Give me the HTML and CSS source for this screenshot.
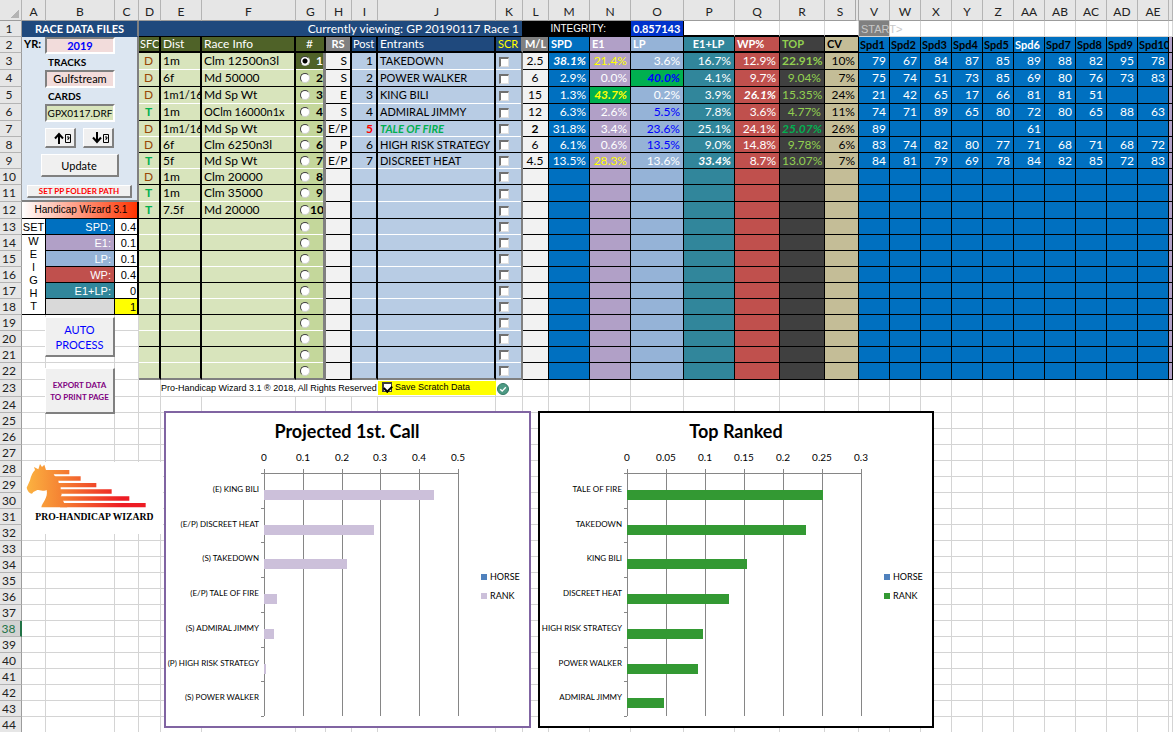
FILE: index.html
```html
<!DOCTYPE html>
<html lang="en">
<head>
<meta charset="utf-8">
<title>Pro-Handicap Wizard 3.1</title>
<link rel="stylesheet" href="styles.css">
</head>
<body>
<main class="sheet">
  <table class="grid">
    <colgroup id="cols"></colgroup>
    <thead><tr id="letters"></tr></thead>
    <tbody id="rows"></tbody>
  </table>

  <button class="float-btn auto" type="button">AUTO<br>PROCESS</button>
  <button class="float-btn export" type="button">EXPORT DATA<br>TO PRINT PAGE</button>

  <svg class="logo" viewBox="0 0 423 216" role="img" aria-label="Pro-Handicap Wizard">
    <defs>
      <linearGradient id="flame" gradientUnits="userSpaceOnUse" x1="20" y1="0" x2="300" y2="0">
        <stop offset="0" stop-color="#fbb040"/><stop offset=".35" stop-color="#f58233"/><stop offset="1" stop-color="#ed1c24"/>
      </linearGradient>
    </defs>
    <g fill="url(#flame)">
      <path d="M39 24 L36 15 L49 22 L54 6 L60 15 L67 8 L72 24 L90 26 L98 42 L108 50 L110 62 L116 72 L116 86 L119 98 L115 106 L121 112 L128 126 L136 136 L58 136 C60 122 79 108 74 84 C66 90 54 82 46 84 L34 90 L30 95 Q18 94 14 77 L24 55 Q28 35 39 24Z"/>
      <path d="M70 24H142V37H70zM89 43H176V56H89zM102 63H223V76H102zM108 82H269V95H108zM114 103H322V116H114zM114 123H371V136H114z"/>
    </g>
    <text x="40" y="174" class="logo-name">PRO-HANDICAP WIZARD</text>
  </svg>

  <label class="save"><input type="checkbox" class="tick" checked>Save Scratch Data</label>
  <svg class="ok" viewBox="0 0 12 12" aria-hidden="true">
    <circle cx="6" cy="6" r="5.5" fill="#4d9a84" stroke="#347a66"/>
    <path d="M3.2 6.2 5.2 8.1 8.8 4.2" fill="none" stroke="#fff" stroke-width="1.4"/>
  </svg>

  <figure class="chart call" id="chart-call"></figure>
  <figure class="chart top" id="chart-top"></figure>
</main>

<template id="files-panel">
  <form class="files">
    <label for="year">YR:</label><input id="year" class="year" value="2019">
    <label for="tracks" class="over">TRACKS</label>
    <input id="tracks" class="track" value="Gulfstream">
    <label for="cards" class="over">CARDS</label>
    <input id="cards" class="card" value="GPX0117.DRF">
    <div class="steps">
      <button type="button" aria-label="Previous card"><svg viewBox="0 0 18 12"><path d="M5 12V3M1 6.500 5 2 9 6.500" fill="none" stroke="#000" stroke-width="2"/><path d="M11.500 2.500h5v8h-5zM13 5h2v1.500h-1v1.500" fill="none" stroke="#000"/></svg></button>
      <button type="button" aria-label="Next card"><svg viewBox="0 0 18 12"><path d="M5 0V9M1 5.500 5 10 9 5.500" fill="none" stroke="#000" stroke-width="2"/><path d="M11.500 2.500h5v8h-5zM13 5h2v1.500h-1v1.500" fill="none" stroke="#000"/></svg></button>
    </div>
    <button type="button" class="update">Update</button>
    <button type="button" class="path">SET PP FOLDER PATH</button>
  </form>
</template>
<script src="script.js"></script>
</body>
</html>
```

FILE: styles.css
```css
* { box-sizing: border-box; }
body {
  margin: 0;
  background: #fff;
  color: #000;
  font: 12px/14px Lato, "Noto Sans", sans-serif;
}
.sheet { position: relative; overflow: hidden; }
.grid {
  width: 100%;
  table-layout: fixed;
  border-collapse: separate;
  border-spacing: 0;
}
.grid td, .grid th {
  padding: 0 3px 0 2px;
  overflow: hidden;
  white-space: nowrap;
  font-weight: normal;
  text-align: left;
  border: 0 solid #d4d4d4;
  border-width: 0 1px 1px 0;
}
.row16 { height: 16px; }
.row17 { height: 17px; }

/* sheet headings */
.letters { height: 21px; }
.grid .letters th {
  padding: 4px 0 0;
  text-align: center;
  color: #222;
  background: #e6e6e6;
  border-color: #b4b4b4;
  border-bottom-color: #9c9c9c;
}
.grid .letters .hidden-after { border-right: 4px double #a8a8a8; }
.grid .letters .corner {
  background: linear-gradient(135deg, transparent 50%, #b4b4b4 50%) 10px 9px / 9px 9px no-repeat #e6e6e6;
}
.grid th.num {
  padding: 0;
  padding-right: 3px;
  text-align: center;
  color: #222;
  background: #e6e6e6;
  border-color: #b4b4b4;
  border-right-color: #9c9c9c;
}
.grid th.active { background: #d2d2d2; color: #217346; border-right: 2px solid #217346; }

/* alignment and emphasis */
.grid .r { text-align: right; }
.grid .c { text-align: center; }
.grid .b { font-weight: bold; }
.grid .hot { font-weight: bold; font-style: italic; }
.grid .yellow { color: #ff0; }
.grid .white { color: #fff; }
.grid .blue { color: #00f; }
.grid .red { color: #f00; }
.grid .green { color: #00b050; }
.grid .brown { color: #974706; }
.grid .on-green { background: #00b050; }
.grid .small { font-size: 11px; }
.grid .flush { padding-left: 1px; padding-right: 0; }

/* title row */
.grid .bar { background: #1f497d; color: #fff; border-color: #000; }
.grid .files-head { padding: 0; text-align: center; font-size: 11px; font-weight: bold; border-right: 2px solid #808080; border-bottom-color: #1f497d; }
.grid .black { background: #000; border-color: #000; color: #fff; }
.sans { font-family: "Liberation Sans", sans-serif; font-size: 11px; }
.grid .integrity { padding-right: 24px; font-size: 10px; }
.grid .score { background: #0033cc; color: #fff; font-size: 11px; font-weight: bold; border-color: #000; }
.grid .start { background: #808080; color: #c8c8c8; overflow: visible; }
.grid .ruled { border-bottom: 2px solid #000; }

/* race list */
.grid .race { background: #d8e4bc; border-color: #000; border-right-width: 2px; }
.grid .race-no { background: #c4d79b; border-color: #000; border-right: 3px solid #808080; }
.grid .race-head { background: #4f6228; color: #fff; border-color: #000; border-width: 0 2px 2px 0; }
.grid .chosen { background: #4f6228; color: #fff; }
.pick { display: flex; align-items: center; justify-content: space-between; padding-left: 3px; height: 14px; }
.dot {
  appearance: none;
  flex: none;
  width: 10px;
  height: 10px;
  margin: 0;
  border: 1px solid #404040;
  border-right-color: #d0d0d0;
  border-bottom-color: #d0d0d0;
  border-radius: 50%;
  background: #fff;
}
.dot:checked { background: radial-gradient(#000 0 2px, #fff 3px); }

/* entrants */
.grid .style { background: #f2f2f2; border-color: #000; border-right-width: 2px; }
.grid .ent { background: #b8cce4; border-color: #000; border-right-width: 2px; }
.grid .scr { border-right: 2px solid #808080; }
.grid .head-grey { background: #808080; color: #fff; border-bottom-width: 2px; padding: 0; text-align: center; }
.grid .head-navy { background: #1f497d; color: #fff; border-bottom: 2px solid #000; }
.grid .head-navy.yellow { color: #ff0; }
.grid .odd { padding-bottom: 1px; border-bottom-width: 0; box-shadow: inset 0 -1px #fff; }
.tick {
  appearance: none;
  display: block;
  flex: none;
  width: 10px;
  height: 10px;
  margin: 1px 0 0 1px;
  border: 1px solid #707070;
  border-width: 2px 1px 1px 2px;
  border-right-color: #e0e0e0;
  border-bottom-color: #e0e0e0;
  background: #fff;
}
.grid .last { border-bottom: 2px solid #808080; }

/* ratings */
.grid .ml, .grid .spd, .grid .e1, .grid .lp, .grid .e1lp, .grid .wp, .grid .top-pct, .grid .cv { border-color: #000; }
.grid .ml { background: #f2f2f2; text-align: center; }
.grid .spd { background: #0070c0; color: #fff; }
.grid .e1 { background: #b1a0c7; color: #fff; }
.grid .lp { background: #95b3d7; color: #fff; }
.grid .e1lp { background: #31869b; color: #fff; }
.grid .wp { background: #c0504d; color: #fff; }
.grid .top-pct { background: #404040; color: #92d050; }
.grid .cv { background: #c4bd97; }
.grid .ml.head-grey { background: #808080; color: #fff; }
.grid .h2 { border-bottom-width: 2px; }
.grid .yellow.e1 { color: #ff0; }
.grid .blue.lp { color: #00f; }
.grid .green.top-pct { color: #00b050; }
.grid .on-green.e1, .grid .on-green.lp { background: #00b050; }
.grid .dark { color: #000; }

/* data files panel */
.grid .files-cell { padding: 0; background: #dce6f1; vertical-align: top; border: 0 solid #808080; border-width: 0 2px 2px 0; }
.files {
  display: grid;
  grid-template-columns: 23px 70px 1fr;
  grid-template-rows: 17px 16px 18px 16px 18px;
  font-weight: bold;
}
.files > * { grid-column: 1 / -1; }
.files label { grid-column: 1; padding-left: 2px; font-size: 11px; }
.files .over { grid-column: 2 / -1; padding-left: 3px; font-size: 10px; line-height: 17px; }
.files input {
  grid-column: 2;
  width: 100%;
  min-width: 0;
  padding: 0;
  text-align: center;
  font: 11px/14px Lato, sans-serif;
  border: 2px solid #fff;
  border-top-color: #808080;
  border-left-color: #808080;
  border-radius: 0;
}
.files .year { background: #f2dcdb; color: #00f; font-weight: bold; }
.files .track { background: #f2dcdb; }
.files .card { background: #d8e4bc; font-size: 10px; }
.files button, .float-btn {
  padding: 0;
  font-family: Lato, sans-serif;
  background: #f0f0f0;
  border: 1px solid #fff;
  border-right: 2px solid #808080;
  border-bottom: 2px solid #808080;
  border-radius: 0;
}
.steps { display: flex; gap: 7px; margin: 6px 0 6px 23px; }
.steps button { width: 31px; height: 20px; line-height: 0; }
.steps svg { width: 18px; height: 12px; margin-left: 6px; }
.files .update { justify-self: center; width: 78px; height: 23px; font-size: 11px; margin-bottom: 8px; }
.files .path { justify-self: center; width: 105px; height: 13px; font-size: 8px; line-height: 10px; font-weight: bold; color: #f00; }

/* weights */
.grid .wizard { background: linear-gradient(90deg, #fff, #ff3300); text-align: center; font-size: 10px; padding-left: 6px; border-color: #000; border-right-width: 2px; }
.grid .w { border-color: #000; }
.grid .w.sans { padding-right: 2px; }
.grid .w.name { padding-right: 3px; }
.grid .w.set { padding: 0; }
.grid .w.value { padding-right: 1px; border-right-width: 2px; }
.grid .w.tall { padding: 0; text-align: center; line-height: 13px; vertical-align: top; }
.grid .grey { background: #d9d9d9; }
.grid .sum { background: #ff0; }
.grid .note { font-family: "Liberation Sans", sans-serif; font-size: 9px; padding: 0; border-right: 0; }

/* objects that float over the cells */
.float-btn { position: absolute; left: 45px; width: 70px; }
.float-btn.auto { top: 317px; height: 40px; font-size: 11px; line-height: 15px; color: #00f; }
.float-btn.export { top: 368px; height: 46px; font-size: 8px; line-height: 12px; font-weight: bold; color: #800080; }
.logo { position: absolute; left: 22px; top: 462px; width: 141px; height: 72px; background: #fff; }
.logo-name { font: bold 29px "Liberation Serif", serif; }
.save {
  position: absolute;
  left: 378px;
  top: 381px;
  width: 118px;
  height: 14px;
  display: flex;
  gap: 3px;
  padding-left: 3px;
  background: #ff0;
  font: 9px/13px "Liberation Sans", sans-serif;
}
.save .tick { border-color: #404040; }
.save .tick:checked::before {
  content: "";
  display: block;
  width: 4px;
  height: 6px;
  margin: 0 auto;
  border: solid #000;
  border-width: 0 2px 2px 0;
  transform: rotate(45deg);
}
.ok { position: absolute; left: 497px; top: 383px; width: 12px; height: 12px; }
.chart { position: absolute; top: 411px; height: 317px; margin: 0; background: #fff; border: 2px solid #000; }
.chart svg { display: block; width: 100%; height: 100%; }
.chart.call { left: 164px; width: 367px; border-color: #8064a2; }
.chart.top { left: 538px; width: 396px; }
.chart text { font-family: Lato, sans-serif; font-size: 10px; }
.chart .title { font-size: 18px; font-weight: bold; text-anchor: middle; }
.chart .scale { text-anchor: middle; }
.chart .key { font-size: 9px; }
.chart .name { font-size: 8px; text-anchor: end; }
.chart .axis { stroke: #868686; fill: none; shape-rendering: crispEdges; }
.chart rect { shape-rendering: crispEdges; }
```

FILE: script.js
```js
const LETTERS = "A B C D E F G H I J K L M N O P Q R S V W X Y Z AA AB AC AD AE".split(" ");
const WIDTHS = [24, 69, 24, 22, 41, 94, 30, 26, 26, 118, 27, 26, 41, 41, 53, 51, 45, 45, 34,
  31, 31, 31, 31, 31, 31, 31, 31, 31, 31];

const RACES = [
  ["D", "1m", "Clm 12500n3l"], ["D", "6f", "Md 50000"], ["D", "1m1/16", "Md Sp Wt"],
  ["T", "1m", "OClm 16000n1x"], ["D", "1m1/16", "Md Sp Wt"], ["D", "6f", "Clm 6250n3l"],
  ["T", "5f", "Md Sp Wt"], ["D", "1m", "Clm 20000"], ["T", "1m", "Clm 35000"], ["T", "7.5f", "Md 20000"]
];

/* A value may carry classes after a bar: "38.1%|hot". */
const HORSES = [
  ["S", "1", "TAKEDOWN", "2.5", "38.1%|hot", "21.4%|yellow", "3.6%", "16.7%", "12.9%", "22.91%|b", "10%"],
  ["S", "2", "POWER WALKER", "6", "2.9%", "0.0%", "40.0%|hot blue on-green", "4.1%", "9.7%", "9.04%", "7%"],
  ["E", "3", "KING BILI", "15", "1.3%", "43.7%|hot yellow on-green", "0.2%", "3.9%", "26.1%|hot", "15.35%", "24%"],
  ["S", "4", "ADMIRAL JIMMY", "12", "6.3%", "2.6%", "5.5%|blue", "7.8%", "3.6%", "4.77%", "11%"],
  ["E/P", "5|red b", "TALE OF FIRE|hot green", "2|b", "31.8%", "3.4%", "23.6%|blue", "25.1%", "24.1%", "25.07%|hot green", "26%"],
  ["P", "6", "HIGH RISK STRATEGY", "6", "6.1%", "0.6%", "13.5%|blue", "9.0%", "14.8%", "9.78%", "6%"],
  ["E/P", "7", "DISCREET HEAT", "4.5", "13.5%", "28.3%|yellow", "13.6%", "33.4%|hot", "8.7%", "13.07%", "7%"]
];
const SPEEDS = [
  [79, 67, 84, 87, 85, 89, 88, 82, 95, 78],
  [75, 74, 51, 73, 85, 69, 80, 76, 73, 83],
  [21, 42, 65, 17, 66, 81, 81, 51, "", ""],
  [74, 71, 89, 65, 80, 72, 80, 65, 88, 63],
  [89, "", "", "", "", 61, "", "", "", ""],
  [83, 74, 82, 80, 77, 71, 68, 71, 68, 72],
  [84, 81, 79, 69, 78, 84, 82, 85, 72, 83]
];
const WEIGHTS = [["SPD:", "spd", "0.4"], ["E1:", "e1", "0.1"], ["LP:", "lp", "0.1"],
  ["WP:", "wp", "0.4"], ["E1+LP:", "e1lp", "0"], ["", "grey", "1"]];

const td = (text = "", cls = "", attrs = "") => `<td class="${cls}" ${attrs}>${text}</td>`;
const split = value => { const [text, cls = ""] = String(value).split("|"); return [text, cls]; };

document.getElementById("cols").innerHTML =
  `<col style="width:22px">` + WIDTHS.map(w => `<col style="width:${w}px">`).join("") + "<col>";
const head = document.getElementById("letters");
head.className = "letters";
head.innerHTML = `<th class="corner"></th>` +
  LETTERS.map(l => `<th scope="col" class="${l === "S" ? "hidden-after" : ""}">${l}</th>`).join("") + "<th></th>";

function leftCells(r) {
  if (r === 1) return td("RACE DATA FILES", "bar files-head", 'colspan="3"');
  if (r === 2) return td(document.getElementById("files-panel").innerHTML, "files-cell", 'colspan="3" rowspan="10"');
  if (r < 12) return "";
  if (r === 12) return td("Handicap Wizard 3.1", "sans wizard", 'colspan="3"');
  if (r <= 18) {
    const [name, cls, value] = WEIGHTS[r - 13];
    let out = r === 13 ? td("SET", "w set sans c") : "";
    if (r === 14) out = td([..."WEIGHT"].join("<br>"), "w sans tall", 'rowspan="5"');
    return out + td(name, `w sans name r ${cls}`) + td(value, `w sans value r ${r === 18 ? "sum" : ""}`);
  }
  return td() + td() + td();
}

function titleRow() {
  return td("Currently viewing: GP 20190117 Race 1", "bar r", 'colspan="8"') +
    td("INTEGRITY:", "black sans integrity r", 'colspan="3"') + td("0.857143", "score r") +
    td("", "ruled").repeat(4) + td("START&gt;", "start sans") + td().repeat(10);
}

function headRow() {
  let out = td("SFC", "race-head small flush") + td("Dist", "race-head") + td("Race Info", "race-head") +
    td("#", "race-head race-no chosen c") +
    td("RS", "style head-grey small b") + td("Post", "ent head-navy small flush") + td("Entrants", "ent head-navy") +
    td("SCR", "ent scr head-navy small yellow") + td("M/L", "ml head-grey small b") +
    td("SPD", "spd h2 small b") + td("E1", "e1 h2 small b") + td("LP", "lp h2 small b") + td("E1+LP", "e1lp h2 small b c") +
    td("WP%", "wp h2 small b") + td("TOP", "top-pct h2 small b") + td("CV", "cv h2 small b");
  for (let i = 1; i <= 10; i++) out += td("Spd" + i, `spd small flush b ${i === 6 ? "" : "dark"}`);
  return out + td("", "e1");
}

function dataRow(r) {
  const i = r - 3, race = RACES[i], horse = HORSES[i] || Array(11).fill("");
  const end = r === 22 ? "last" : "", alt = (r % 2 ? "odd " : "") + end;
  const [sfc, dist, info] = race || ["", "", ""];
  let out = td(sfc, `race c ${alt} ${sfc === "T" ? "green b" : "brown"}`) + td(dist, `race ${dist.length > 4 ? "small" : ""} ${alt}`) + td(info, `race ${info.length > 12 ? "small" : ""} ${alt}`);
  out += td(`<span class="pick"><input type="radio" name="race" class="dot" aria-label="Race ${i + 1}" ${i === 0 ? "checked" : ""}>${race ? i + 1 : ""}</span>`,
    `race-no flush b ${alt} ${i === 0 ? "chosen" : ""}`);
  const v = horse.map(split);
  out += td(v[0][0], "style r") + td(v[1][0], `ent r ${alt} ${v[1][1]}`) + td(v[2][0], `ent small ${alt} ${v[2][1]}`);
  out += td(`<input type="checkbox" class="tick" aria-label="Scratch ${i + 1}">`, `ent scr ${alt}`);
  ["ml", "spd", "e1", "lp", "e1lp", "wp", "top-pct", "cv"].forEach((cls, k) => {
    const [text, extra] = v[k + 3];
    out += td(text, `${cls} r ${k === 0 ? "c" : ""} ${extra}`);
  });
  (SPEEDS[i] || Array(10).fill("")).forEach(s => { out += td(s, "spd r"); });
  return out + td("", "e1");
}

function blankRow(r) {
  if (r !== 23) return td().repeat(27);
  return td() + td("Pro-Handicap Wizard 3.1 &reg; 2018, All Rights Reserved", "note", 'colspan="5"') + td().repeat(21);
}

const TALL = new Set([3, 4, 5, 6, 11, 12, 22, 23]);
let html = "";
for (let r = 1; r <= 44; r++) {
  const body = r === 1 ? titleRow() : r === 2 ? headRow() : r <= 22 ? dataRow(r) : blankRow(r);
  html += `<tr class="${TALL.has(r) ? "row17" : "row16"}"><th scope="row" class="num ${r === 38 ? "active" : ""}">${r}</th>${leftCells(r)}${body}</tr>`;
}
document.getElementById("rows").innerHTML = html;

/* Horizontal bar chart; x0 and step are in pixels inside the frame. */
function chart(id, o) {
  const top = 60, band = 243 / 7, bottom = top + 243, right = o.x0 + o.step * (o.ticks.length - 1);
  let s = `<svg viewBox="0 0 ${o.width} 313" role="img" aria-label="${o.title}"><text class="title" x="${o.mid}" y="25">${o.title}</text>`;
  let axis = `M${o.x0 - 3} ${top}H${right}`;
  o.ticks.forEach((t, i) => {
    const x = Math.round(o.x0 + o.step * i);
    axis += `M${x} ${top - 4}V${bottom}`;
    s += `<text class="scale" x="${x}" y="48">${t}</text>`;
  });
  for (let i = 1; i <= 7; i++) axis += `M${o.x0 - 3} ${Math.round(top + band * i)}h3`;
  s += `<path class="axis" d="${axis}"/>`;
  o.data.forEach(([name, value], i) => {
    const y = Math.round(77 + band * i);
    s += `<text class="name" x="${o.x0 - 5}" y="${y + 2}">${name}</text>`;
    s += `<rect x="${o.x0}" y="${y}" width="${value / o.unit * o.step}" height="10" fill="${o.color}"/>`;
  });
  s += `<rect x="${o.key}" y="161" width="6" height="6" fill="#4f81bd"/><text class="key" x="${o.key + 9}" y="167">HORSE</text>`;
  s += `<rect x="${o.key}" y="180" width="6" height="6" fill="${o.color}"/><text class="key" x="${o.key + 9}" y="186">RANK</text></svg>`;
  document.getElementById(id).innerHTML = s;
}
chart("chart-call", {
  title: "Projected 1st. Call", width: 363, mid: 181, x0: 98, step: 38.8, unit: 0.1, key: 315, color: "#ccc0da",
  ticks: [0, 0.1, 0.2, 0.3, 0.4, 0.5],
  data: [["(E) KING BILI", 0.437], ["(E/P) DISCREET HEAT", 0.283], ["(S) TAKEDOWN", 0.214], ["(E/P) TALE OF FIRE", 0.034],
    ["(S) ADMIRAL JIMMY", 0.026], ["(P) HIGH RISK STRATEGY", 0.006], ["(S) POWER WALKER", 0]]
});
chart("chart-top", {
  title: "Top Ranked", width: 392, mid: 196, x0: 87, step: 39, unit: 0.05, key: 344, color: "#339933",
  ticks: [0, 0.05, 0.1, 0.15, 0.2, 0.25, 0.3],
  data: [["TALE OF FIRE", 0.2507], ["TAKEDOWN", 0.2291], ["KING BILI", 0.1535], ["DISCREET HEAT", 0.1307],
    ["HIGH RISK STRATEGY", 0.0978], ["POWER WALKER", 0.0904], ["ADMIRAL JIMMY", 0.0477]]
});
```
